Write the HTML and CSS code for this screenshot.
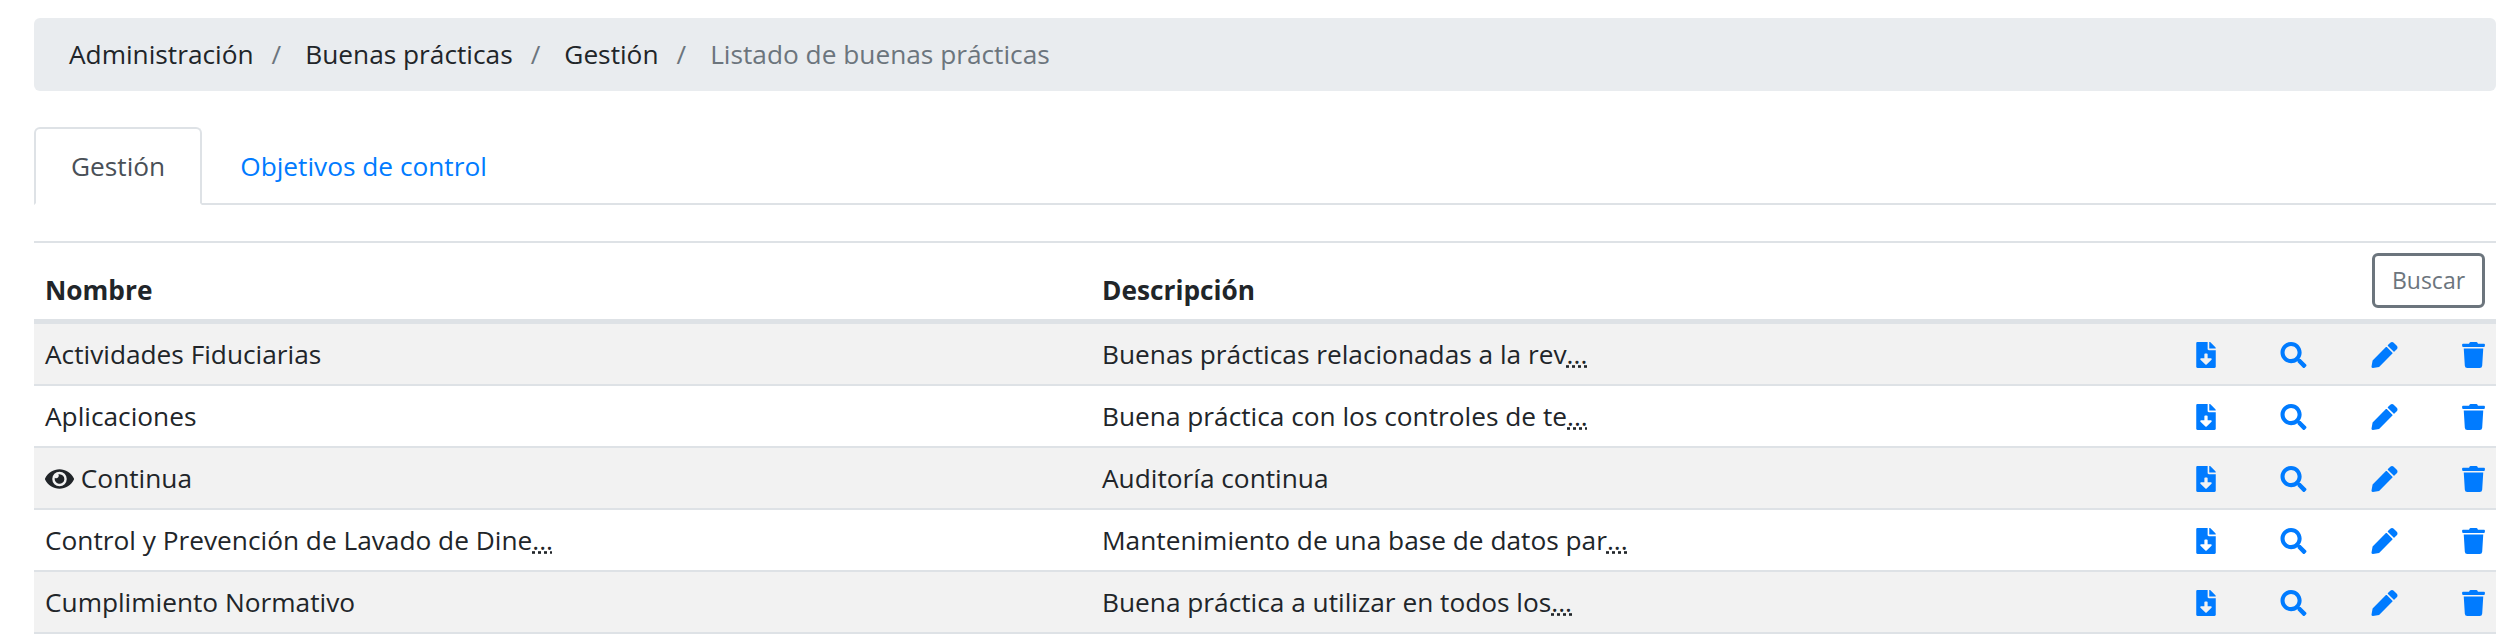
FILE: index.html
```html
<!DOCTYPE html>
<html lang="es">
<head>
    <meta charset="UTF-8">
    <title>Listado de buenas prácticas</title>
    <link rel="stylesheet" href="styles.css">
</head>
<body>
    <svg class="sprite" xmlns="http://www.w3.org/2000/svg">
        <symbol id="i-file" viewBox="0 0 384 512"><path d="M224 136V0H24C10.700 0 0 10.700 0 24v464c0 13.300 10.700 24 24 24h336c13.300 0 24-10.700 24-24V160H248c-13.200 0-24-10.800-24-24zm76.450 211.360l-96.420 95.700c-6.650 6.610-17.390 6.610-24.040 0l-96.420-95.700C73.420 337.290 80.540 320 94.820 320H160v-80c0-8.840 7.160-16 16-16h32c8.840 0 16 7.160 16 16v80h65.180c14.280 0 21.400 17.290 11.270 27.360zM377 105L279.100 7c-4.500-4.500-10.600-7-17-7H256v128h128v-6.100c0-6.300-2.500-12.400-7-16.900z"/></symbol>
        <symbol id="i-search" viewBox="0 0 512 512"><path d="M505 442.700L405.300 343c-4.500-4.500-10.600-7-17-7H372c27.600-35.300 44-79.700 44-128C416 93.100 322.900 0 208 0S0 93.100 0 208s93.100 208 208 208c48.300 0 92.700-16.400 128-44v16.300c0 6.400 2.500 12.500 7 17l99.700 99.700c9.400 9.400 24.600 9.400 33.900 0l28.300-28.300c9.400-9.400 9.400-24.600.1-34zM208 336c-70.700 0-128-57.200-128-128 0-70.700 57.200-128 128-128 70.700 0 128 57.200 128 128 0 70.700-57.200 128-128 128z"/></symbol>
        <symbol id="i-pencil" viewBox="0 0 512 512"><path d="M497.900 142.100l-46.100 46.100c-4.700 4.700-12.300 4.700-17 0l-111-111c-4.700-4.700-4.700-12.300 0-17l46.100-46.100c18.700-18.700 49.100-18.700 67.900 0l60.100 60.100c18.800 18.700 18.800 49.100 0 67.900zM284.200 99.800L21.600 362.400.4 483.900c-2.900 16.400 11.400 30.600 27.800 27.800l121.500-21.300 262.600-262.600c4.700-4.700 4.700-12.300 0-17l-111-111c-4.800-4.700-12.400-4.700-17.100 0z"/></symbol>
        <symbol id="i-trash" viewBox="0 0 448 512"><path d="M432 32H312l-9.400-18.700A24 24 0 0 0 281.100 0H166.800a23.720 23.720 0 0 0-21.400 13.300L136 32H16A16 16 0 0 0 0 48v32a16 16 0 0 0 16 16h416a16 16 0 0 0 16-16V48a16 16 0 0 0-16-16zM53.200 467a48 48 0 0 0 47.900 45h245.800a48 48 0 0 0 47.900-45L416 128H32z"/></symbol>
        <symbol id="i-eye" viewBox="0 0 576 512"><path d="M572.520 241.400C518.290 135.590 410.930 64 288 64S57.680 135.640 3.480 241.410a32.350 32.350 0 0 0 0 29.190C57.710 376.410 165.070 448 288 448s230.320-71.640 284.520-177.410a32.350 32.350 0 0 0 0-29.190zM288 400a144 144 0 1 1 144-144 143.930 143.930 0 0 1-144 144zm0-240a95.310 95.310 0 0 0-25.310 3.790 47.850 47.850 0 0 1-66.900 66.900A95.780 95.780 0 1 0 288 160z"/></symbol>
    </svg>

    <nav class="breadcrumb">
        <a href="#">Administración</a>
        <span class="sep">/</span>
        <a href="#">Buenas prácticas</a>
        <span class="sep">/</span>
        <a href="#">Gestión</a>
        <span class="sep">/</span>
        <span class="current">Listado de buenas prácticas</span>
    </nav>

    <div class="tabs">
        <a class="tab active" href="#">Gestión</a>
        <a class="tab" href="#">Objetivos de control</a>
    </div>

    <table class="grid">
        <colgroup>
            <col class="col-name">
            <col class="col-desc">
            <col class="col-act">
            <col class="col-act">
            <col class="col-act">
            <col class="col-last">
        </colgroup>
        <thead>
            <tr>
                <th>Nombre</th>
                <th>Descripción</th>
                <th colspan="4" class="search-cell"><button class="btn-search">Buscar</button></th>
            </tr>
        </thead>
        <tbody>
            <tr>
                <td>Actividades Fiduciarias</td>
                <td>Buenas prácticas relacionadas a la rev<abbr>...</abbr></td>
                <td class="act"><svg class="ico file"><use href="#i-file"/></svg></td>
                <td class="act"><svg class="ico search"><use href="#i-search"/></svg></td>
                <td class="act"><svg class="ico pencil"><use href="#i-pencil"/></svg></td>
                <td class="act"><svg class="ico trash"><use href="#i-trash"/></svg></td>
            </tr>
            <tr>
                <td>Aplicaciones</td>
                <td>Buena práctica con los controles de te<abbr>...</abbr></td>
                <td class="act"><svg class="ico file"><use href="#i-file"/></svg></td>
                <td class="act"><svg class="ico search"><use href="#i-search"/></svg></td>
                <td class="act"><svg class="ico pencil"><use href="#i-pencil"/></svg></td>
                <td class="act"><svg class="ico trash"><use href="#i-trash"/></svg></td>
            </tr>
            <tr>
                <td><svg class="eye"><use href="#i-eye"/></svg> Continua</td>
                <td>Auditoría continua</td>
                <td class="act"><svg class="ico file"><use href="#i-file"/></svg></td>
                <td class="act"><svg class="ico search"><use href="#i-search"/></svg></td>
                <td class="act"><svg class="ico pencil"><use href="#i-pencil"/></svg></td>
                <td class="act"><svg class="ico trash"><use href="#i-trash"/></svg></td>
            </tr>
            <tr>
                <td>Control y Prevención de Lavado de Dine<abbr>...</abbr></td>
                <td>Mantenimiento de una base de datos par<abbr>...</abbr></td>
                <td class="act"><svg class="ico file"><use href="#i-file"/></svg></td>
                <td class="act"><svg class="ico search"><use href="#i-search"/></svg></td>
                <td class="act"><svg class="ico pencil"><use href="#i-pencil"/></svg></td>
                <td class="act"><svg class="ico trash"><use href="#i-trash"/></svg></td>
            </tr>
            <tr>
                <td>Cumplimiento Normativo</td>
                <td>Buena práctica a utilizar en todos los<abbr>...</abbr></td>
                <td class="act"><svg class="ico file"><use href="#i-file"/></svg></td>
                <td class="act"><svg class="ico search"><use href="#i-search"/></svg></td>
                <td class="act"><svg class="ico pencil"><use href="#i-pencil"/></svg></td>
                <td class="act"><svg class="ico trash"><use href="#i-trash"/></svg></td>
            </tr>
        </tbody>
    </table>
</body>
</html>
```

FILE: styles.css
```css
html, body {
    height: 637px;
    overflow: hidden;
}

body {
    margin: 0;
    padding: 18px 4px 0 34px;
    font-family: "Open Sans", sans-serif;
    font-size: 26.25px;
    line-height: 39px;
    color: #212529;
    background: #fff;
}

.sprite {
    display: none;
}

a {
    text-decoration: none;
}

/* Ruta de navegacion */
.breadcrumb {
    display: flex;
    height: 73px;
    box-sizing: border-box;
    padding: 17px 35px;
    background: #e9ecef;
    border-radius: 6px;
}

.breadcrumb a {
    color: #212529;
}

.breadcrumb .sep {
    color: #6c757d;
    padding: 0 24px 0 18px;
}

.breadcrumb .current {
    color: #6c757d;
}

/* Pestanas */
.tabs {
    display: flex;
    height: 78px;
    box-sizing: border-box;
    margin-top: 36px;
    border-bottom: 2px solid #dee2e6;
}

.tab {
    height: 78px;
    box-sizing: border-box;
    padding: 18px 35px;
    border: 2px solid transparent;
    border-radius: 6px 6px 0 0;
    color: #007bff;
}

.tab + .tab {
    margin-left: 1px;
}

.tab.active {
    color: #495057;
    background: #fff;
    border-color: #dee2e6 #dee2e6 #fff;
}

/* Tabla */
.grid {
    width: 100%;
    margin-top: 36px;
    table-layout: fixed;
    border-collapse: separate;
    border-spacing: 0;
    border-top: 2px solid #dee2e6;
}

.col-name { width: 1057px; }
.col-act { width: 91px; }
.col-last { width: 87px; }

.grid th {
    height: 81px;
    padding: 0 11px 9px;
    box-sizing: border-box;
    font-weight: 700;
    text-align: left;
    vertical-align: bottom;
    color: #212529;
    border-bottom: 5px solid #dee2e6;
}

.grid th.search-cell {
    padding-bottom: 11px;
    text-align: right;
}

.btn-search {
    display: block;
    width: 113px;
    height: 55px;
    margin-left: auto;
    padding: 0;
    font-family: inherit;
    font-size: 23px;
    line-height: 1;
    color: #6c757d;
    background: #fff;
    border: 3px solid #6c757d;
    border-radius: 6px;
}

.grid td {
    height: 62px;
    padding: 0 11px;
    box-sizing: border-box;
    border-bottom: 2px solid #dee2e6;
    white-space: nowrap;
}

.grid tbody tr:nth-child(odd) {
    background: #f2f2f2;
}

.grid td.act {
    padding: 0 11px 3px 0;
    text-align: right;
}

.grid abbr {
    text-decoration: underline dotted;
}

.ico {
    display: inline-block;
    height: 26px;
    fill: #007bff;
    vertical-align: middle;
}

.ico.file { width: 20px; }
.ico.search, .ico.pencil { width: 27px; }
.ico.trash { width: 23px; }

.eye {
    display: inline-block;
    width: 29px;
    height: 26px;
    fill: #212529;
    vertical-align: -4px;
}
```
